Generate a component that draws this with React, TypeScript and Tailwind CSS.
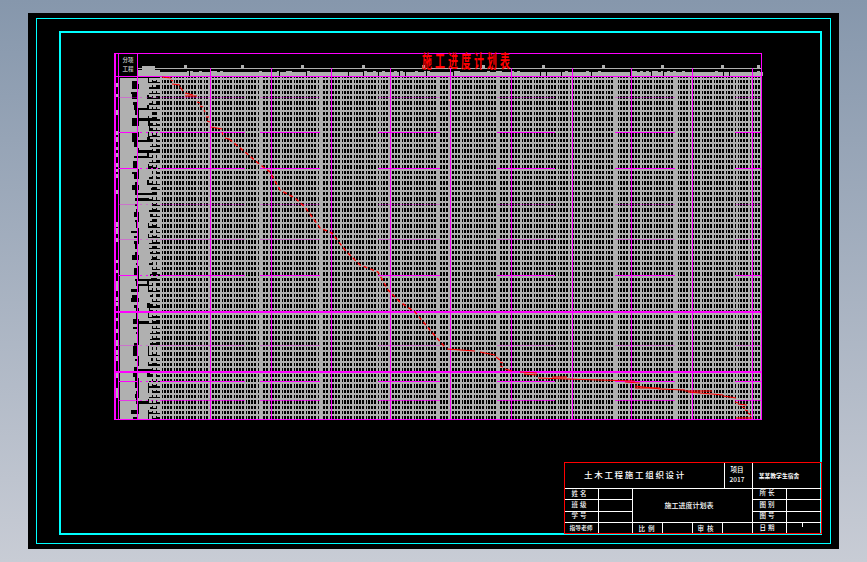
// CAD sheet preview: schedule chart drawn in a black model space with cyan frames
const GRAY = '#b0b0b0';
const MAGENTA = '#ff00ff';
const RED = '#ff0000';

// small seeded generator so the noise of the illegible text columns stays the same on every run
function makeRandom(seed: number) {
  let s = seed;
  return () => {
    s = (s * 1664525 + 1013904223) % 4294967296;
    return Math.floor(s / 65536) / 65536;
  };
}

const rows: number[] = [];
for (let y = 78; y < 418; y += 5.34) rows.push(Math.round(y));

const cols: number[] = [];
for (let x = 160; x < 761; x += 3) cols.push(x);

const HEAVY_GRAY = [202, 260, 320, 379, 438, 497, 556, 614, 674, 733];
const TICKS = [184, 241, 301, 362, 422, 482, 542, 602, 661, 721, 757];
const MAGENTA_COLS = [210, 271, 331, 390, 450, 511, 572, 631, 692, 752];
const SPANS = [[118, 137], [140, 142], [146, 148], [151, 153], [156, 158], [160, 245], [260, 320], [378, 440], [497, 555], [615, 675], [735, 761]];

const noise = (() => {
  const rnd = makeRandom(17);
  const out: { x: number; y: number; w: number; h: number }[] = [];
  rows.forEach((y) => {
    // task names
    out.push({ x: 120, y, w: 11 + Math.round(rnd() * 6), h: 6 });
    if (rnd() > 0.5) out.push({ x: 131, y, w: 6, h: 3 });
    // durations
    out.push({ x: 138 + Math.round(rnd()), y, w: 9 + Math.round(rnd() * 3), h: rnd() > 0.15 ? 6 : 3 });
    // start / finish columns
    [149, 153, 157].forEach((x) => {
      if (rnd() > 0.15) out.push({ x, y, w: 3, h: 3 + Math.round(rnd() * 2) });
    });
    // row numbers in the narrow strip
    if (rnd() > 0.6) out.push({ x: 116, y, w: 2, h: 3 + Math.round(rnd() * 3) });
  });
  return out;
})();

const headerNoise = (() => {
  const rnd = makeRandom(5);
  return cols.map((x) => {
    const tall = rnd() > 0.8;
    return { x, y: tall ? 71 : 72, w: rnd() > 0.1 ? 3 : 2, h: tall ? 5 : 4 };
  });
})();

// critical path, read off the chart
const STEPS: [number, number, number, number][] = [
  [162, 77, 171, 78], [171, 80, 173, 81], [172, 84, 180, 85], [180, 87, 183, 91], [185, 93, 193, 95],
  [185, 96, 197, 96], [197, 102, 200, 103], [200, 106, 203, 107], [204, 110, 205, 112], [206, 117, 209, 117],
  [207, 121, 210, 122], [211, 127, 222, 129], [222, 132, 223, 135], [225, 138, 229, 139],
  [500, 362, 503, 363], [500, 366, 503, 367], [505, 369, 512, 371], [520, 372, 537, 373], [524, 374, 537, 375],
  [538, 378, 567, 379], [552, 377, 567, 377], [567, 379, 600, 380], [600, 380, 635, 381], [625, 382, 640, 383],
  [635, 386, 660, 389], [635, 388, 660, 388], [660, 389, 685, 390], [685, 391, 712, 391], [688, 392, 700, 393],
  [700, 393, 723, 395], [723, 396, 730, 397], [730, 397, 736, 398], [735, 402, 738, 403], [738, 404, 747, 405],
  [742, 407, 745, 408], [745, 410, 748, 411], [748, 413, 751, 415], [736, 418, 752, 418],
  [447, 349, 475, 351], [480, 352, 495, 355], [496, 357, 500, 360],
];
const DIAGONAL = '229,139 245,152 258,163 270,172 280,190 295,198 305,207 320,228 332,233 345,250 360,265 378,272 388,290 400,302 415,312 430,330 445,347';

function Label({ x, y, children, size = 6.5, bold = false, spacing = 0 }: {
  x: number; y: number; children: string; size?: number; bold?: boolean; spacing?: number;
}) {
  return (
    <text x={x} y={y} fill="#fff" fontSize={size} fontWeight={bold ? 700 : 500} textAnchor="middle" letterSpacing={spacing}>
      {children}
    </text>
  );
}

function TitleBlock() {
  return (
    <g>
      <g shapeRendering="crispEdges" fill="#fff">
        <rect x={564} y={488} width={258} height={1} />
        <rect x={564} y={522} width={258} height={1} />
        <rect x={564} y={499} width={68} height={1} />
        <rect x={564} y={511} width={68} height={1} />
        <rect x={752} y={499} width={70} height={1} />
        <rect x={752} y={511} width={70} height={1} />
        <rect x={724} y={462} width={1} height={26} />
        <rect x={752} y={462} width={1} height={72} />
        <rect x={598} y={488} width={1} height={46} />
        <rect x={632} y={488} width={1} height={46} />
        <rect x={786} y={488} width={1} height={46} />
        <rect x={662} y={522} width={1} height={12} />
        <rect x={692} y={522} width={1} height={12} />
        <rect x={722} y={522} width={1} height={12} />
        <rect x={802} y={523} width={1} height={4} />
        <rect x={564.5} y={462.5} width={257} height={71} fill="none" stroke={RED} />
      </g>
      <Label x={635} y={478} size={8.5} spacing={1.7}>土木工程施工组织设计</Label>
      <Label x={737} y={472} size={6.5}>项目</Label>
      <Label x={737} y={482} size={6.5}>2017</Label>
      <Label x={779} y={478} size={5.8} bold>某某教学生宿舍</Label>
      <Label x={580} y={496} spacing={2}>姓名</Label>
      <Label x={580} y={507} spacing={2}>班级</Label>
      <Label x={580} y={518} spacing={2}>学号</Label>
      <Label x={581} y={530} size={5.8}>指导老师</Label>
      <Label x={689} y={508} size={7}>施工进度计划表</Label>
      <Label x={648} y={531} spacing={3}>比例</Label>
      <Label x={707} y={531} spacing={3}>审核</Label>
      <Label x={768} y={495} spacing={2}>所长</Label>
      <Label x={768} y={507} spacing={2}>图别</Label>
      <Label x={768} y={518} spacing={2}>图号</Label>
      <Label x={768} y={530} spacing={2}>日期</Label>
    </g>
  );
}

function Drawing() {
  return (
    <svg viewBox="61 33 759 500" width={759} height={500} className="block overflow-visible font-['Noto_Sans_CJK_SC',sans-serif]">
      <g shapeRendering="crispEdges">
        {/* grid */}
        <g fill={GRAY}>
          {rows.map((y) => <rect key={y} x={150} y={y} width={611} height={2} />)}
          {cols.map((x, i) => <rect key={x} x={x} y={76} width={i % 4 === 0 ? 2 : 1} height={343} />)}
          {HEAVY_GRAY.map((x) => <rect key={x} x={x} y={76} width={2} height={343} />)}
          {noise.map((n, i) => <rect key={i} x={n.x} y={n.y} width={n.w} height={n.h} />)}
          {/* header */}
          <rect x={137} y={68} width={624} height={1} />
          <rect x={138} y={70} width={22} height={6} />
          <rect x={142} y={66} width={13} height={4} />
          {headerNoise.map((n) => <rect key={n.x} x={n.x} y={n.y} width={n.w} height={n.h} />)}
          {TICKS.map((x) => <rect key={x} x={x} y={65} width={3} height={4} />)}
        </g>

        {/* magenta rules */}
        <g fill={MAGENTA}>
          {MAGENTA_COLS.map((x) => <rect key={x} x={x} y={68} width={1} height={351} />)}
          <rect x={114} y={53} width={648} height={1} />
          <rect x={114} y={76} width={648} height={1} />
          <rect x={114} y={419} width={648} height={1} />
          <rect x={114} y={53} width={2} height={367} />
          <rect x={118} y={53} width={1} height={367} />
          <rect x={137} y={53} width={1} height={367} />
          <rect x={761} y={53} width={1} height={367} />
          <rect x={114} y={311} width={648} height={2} />
          <rect x={114} y={371} width={648} height={2} />
          {[97, 204, 239, 345].map((y) => (
            <g key={y} opacity={0.35}>
              {SPANS.map(([a, b]) => <rect key={a} x={a} y={y} width={b - a} height={1} />)}
            </g>
          ))}
          {[132, 168, 275, 381].map((y) => (
            <g key={y}>
              {SPANS.map(([a, b]) => <rect key={a} x={a} y={y} width={b - a} height={1} />)}
            </g>
          ))}
          <g opacity={0.7}>
            {SPANS.map(([a, b]) => <rect key={a} x={a} y={400} width={b - a} height={1} />)}
          </g>
        </g>
      </g>

      {/* critical path */}
      <g stroke={RED} strokeWidth={1.1} fill="none">
        {STEPS.map(([x1, y1, x2, y2]) => <line key={`${x1}-${y1}`} x1={x1} y1={y1} x2={x2} y2={y2} />)}
        <polyline points={DIAGONAL} strokeDasharray="4 3" strokeWidth={1.4} />
      </g>

      {/* sheet title */}
      {Array.from('施工进度计划表').map((c, i) => (
        <text key={i} transform={`translate(${427 + i * 13} 68) scale(0.55 1)`} fill={RED} fontSize={18} fontWeight={700} textAnchor="middle">
          {c}
        </text>
      ))}

      <text x={128} y={62} fill={GRAY} fontSize={5.5} fontWeight={700} textAnchor="middle">分项</text>
      <text x={128} y={71} fill={GRAY} fontSize={5.5} fontWeight={700} textAnchor="middle">工程</text>

      <TitleBlock />
    </svg>
  );
}

export default function App() {
  return (
    <div className="h-[562px] w-[867px] overflow-hidden bg-linear-to-b from-[#8697ac] to-[#c8ccd5] pl-[28px] pt-[13px]">
      <div className="h-[536px] w-[811px] bg-black pl-[8px] pt-[5px]">
        <div className="h-[526px] w-[795px] border border-[#00ffff] pl-[22px] pt-[12px]">
          <div className="h-[504px] w-[763px] border-2 border-[#00ffff]">
            <Drawing />
          </div>
        </div>
      </div>
    </div>
  );
}
